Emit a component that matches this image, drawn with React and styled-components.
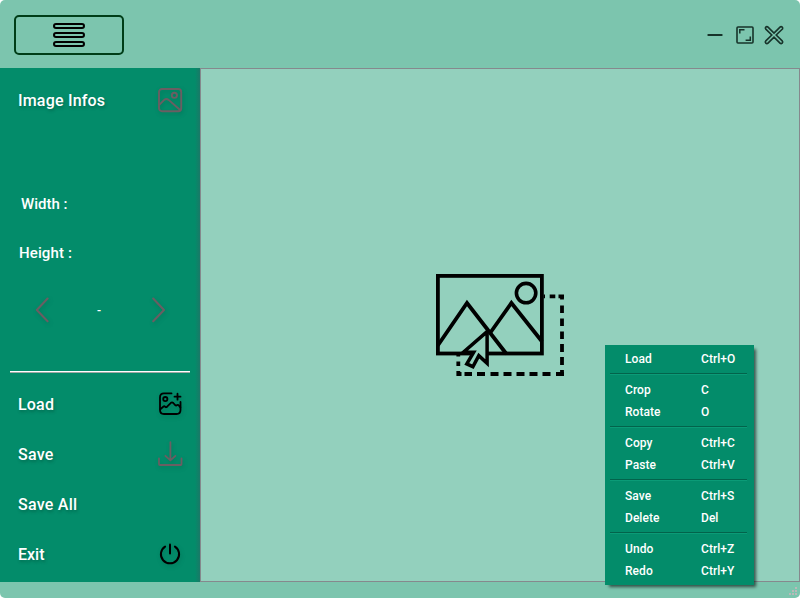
import React from "react";
import styled, { createGlobalStyle } from "styled-components";

const GlobalStyle = createGlobalStyle`
  * { box-sizing: border-box; }
  body { margin: 0; background: #fff; font-family: Roboto, "Liberation Sans", sans-serif; }
`;

const Window = styled.div`
  width: 800px;
  height: 598px;
  display: grid;
  grid-template-rows: 68px 514px 16px;
  background: #7cc5ae;
  border-radius: 5px;
  overflow: hidden;
  position: relative;
`;

const TitleBar = styled.header`
  display: flex;
  justify-content: space-between;
  align-items: center;
  padding: 2px 15px 0 14px;
`;

const MenuButton = styled.button`
  width: 110px;
  height: 40px;
  padding: 0;
  display: flex;
  align-items: center;
  justify-content: center;
  background: transparent;
  border: 2px solid #003d18;
  border-radius: 5px;
`;

const WindowControls = styled.div`
  display: flex;
  align-items: center;
  svg { display: block; }
`;

const Body = styled.div`
  display: grid;
  grid-template-columns: 200px 600px;
`;

const Sidebar = styled.aside`
  background: linear-gradient(to right, #038c6a 195px, #1a7967 200px);
  display: flex;
  flex-direction: column;
  color: #fff;
  font-weight: 500;
`;

const SideRow = styled.div`
  height: ${(p) => p.$height || 50}px;
  padding: 0 17px 0 18px;
  display: flex;
  align-items: center;
  justify-content: space-between;
  font-size: 16px;
  letter-spacing: ${(p) => p.$spacing || 0}px;
  text-shadow: 1px 2px 3px rgba(0, 55, 40, 0.35);
  svg { display: block; filter: drop-shadow(1px 2px 2px rgba(0, 55, 40, 0.22)); }
`;

const Dimension = styled.div`
  height: 49px;
  line-height: 49px;
  padding-left: ${(p) => p.$indent}px;
  font-size: 15px;
  letter-spacing: ${(p) => p.$spacing || 0}px;
`;

const Pager = styled.div`
  height: 64px;
  padding: 0 34px 0 35px;
  display: flex;
  align-items: center;
  justify-content: space-between;
  font-size: 12px;
  svg { display: block; filter: drop-shadow(1px 2px 2px rgba(0, 55, 40, 0.22)); }
`;

const PageLabel = styled.span`
  padding: 1px 3px 0 0;
`;

const Divider = styled.hr`
  width: 180px;
  height: 2px;
  margin: 29px 10px 6px;
  border: 0;
  border-top: 1px solid #fff;
  background: #a0a8a4;
`;

const Spacer = styled.div`
  height: ${(p) => p.$height}px;
`;

const Canvas = styled.main`
  background: #93d0bd;
  border: 1px solid #85898d;
  padding: 204px 0 0 234px;
  svg { display: block; }
`;

const Footer = styled.footer`
  display: flex;
  justify-content: flex-end;
  align-items: flex-end;
  padding: 0 2px 2px 0;
`;

const ContextMenu = styled.nav`
  position: absolute;
  left: 605px;
  top: 345px;
  width: 149px;
  height: 240px;
  padding: 3px 0;
  background: #038c6a;
  color: #fff;
  box-shadow: 3px 3px 3px -1px rgba(0, 0, 0, 0.6);
  font-size: 12px;
  font-weight: 500;
`;

const MenuItem = styled.div`
  height: 22px;
  line-height: 22px;
  padding-left: 20px;
  display: grid;
  grid-template-columns: 76px 1fr;
  letter-spacing: 0.05px;
`;

const Separator = styled.div`
  height: 2px;
  margin: 3px 7px 4px 5px;
  border-top: 1px solid #02634b;
  border-bottom: 1px solid #0b9b77;
`;

const DIM = "#6a5e62";

const HamburgerIcon = () => (
  <svg width="34" height="26" viewBox="0 0 34 26" fill="none" stroke="#000" strokeWidth="2">
    <rect x="2" y="2" width="30" height="4" rx="2" />
    <rect x="2" y="11" width="30" height="4" rx="2" />
    <rect x="2" y="20" width="30" height="4" rx="2" />
  </svg>
);

const ControlIcons = () => (
  <svg width="80" height="24" viewBox="0 0 80 24" fill="none" stroke="#17332a">
    <path d="M3.3 12H16.7" strokeWidth="2" strokeLinecap="round" />
    <rect x="32" y="4" width="16" height="16" rx="1" strokeWidth="1.6" />
    <path d="M34.8 10.5V6.8H39.5M45.3 13.5V17.2H40.6" strokeWidth="1.5" />
    <path
      d="M60.8 4.1a1.55 1.55 0 0 1 2.2 0L69 10.1l6-6a1.55 1.55 0 0 1 2.2 2.2L71.2 12l6 5.9a1.55 1.55 0 0 1-2.2 2.2L69 14.1l-6 6a1.55 1.55 0 0 1-2.2-2.2L66.8 12l-6-5.8a1.55 1.55 0 0 1 0-2.1Z"
      strokeWidth="1.6"
    />
  </svg>
);

const ImageIcon = () => (
  <svg width="26" height="26" viewBox="0 0 26 26" fill="none" stroke={DIM} strokeWidth="1.9">
    <rect x="2" y="2" width="22.2" height="22.2" rx="3" />
    <circle cx="17.4" cy="8.3" r="2.6" />
    <path d="M2 18.2L7.2 12.9Q9.4 11 11.7 12.9L23.4 23.2" />
  </svg>
);

const AddImageIcon = () => (
  <svg width="26" height="26" viewBox="0 0 26 26" fill="none" stroke="#000" strokeWidth="1.8" strokeLinecap="round">
    <path d="M14.5 2.4H7Q3 2.4 3 6.4V19Q3 23 7 23H19.5Q23.5 23 23.5 19V11" />
    <circle cx="8.3" cy="8.1" r="2.1" />
    <path d="M20.5 2.7V8.7M17.5 5.7H23.5" />
    <path d="M3.3 18.2L6.2 15.7Q7.3 14.8 8.3 15.9Q9.2 16.7 10.1 15.6L13.9 11.8Q15.1 10.8 16.3 12L18.2 14.1Q19.1 15 20.1 14.1Q21.1 13.6 22 14.6L23.4 16.4" />
  </svg>
);

const DownloadIcon = () => (
  <svg width="26" height="26" viewBox="0 0 26 26" fill="none" stroke={DIM} strokeWidth="1.8" strokeLinecap="round" strokeLinejoin="round">
    <path d="M13.4 1.2V19.2M8.4 14.8L13.4 19.4L18.4 14.8" />
    <path d="M2 17.5V23.3Q2 24 2.8 24H23.8Q24.5 24 24.5 23.3V17.5" />
  </svg>
);

const PowerIcon = () => (
  <svg width="26" height="26" viewBox="0 0 26 26" fill="none" stroke="#000" strokeWidth="2" strokeLinecap="round">
    <path d="M13 3.6V12.5" />
    <path d="M8.1 5.6A9.1 9.1 0 1 0 17.9 5.6" />
  </svg>
);

const Chevron = ({ d }) => (
  <svg width="15" height="26" viewBox="0 0 15 26" fill="none" stroke={DIM} strokeWidth="2" strokeLinecap="round" strokeLinejoin="round">
    <path d={d} />
  </svg>
);

const PictureSelection = () => (
  <svg width="132" height="106" viewBox="435 273 132 106" fill="none" stroke="#000" strokeWidth="3.8">
    <rect x="437.9" y="275.9" width="104" height="77.6" />
    <circle cx="526.1" cy="293.1" r="9.7" strokeWidth="3.6" />
    <path d="M437.8 345.5L467 303L506.5 354" strokeWidth="3.8" />
    <path d="M490.8 332L511.4 303L542 341.5" strokeWidth="3.8" />
    <path
      d="M487.1 331.6L463.4 352.2H473.7L466.8 363.9L472.9 366.7L478.8 355.6L487.1 363.2Z"
      fill="#93d0bd"
      strokeWidth="3.5"
    />
    <path
      d="M543.6 296.3H545M549.7 296.3H555.3M558.5 296.3H564M562 294.7V299.5M562 305.5V313M562 318.5V326M562 331.5V339M562 344V352M562 357V365M562 370V376M564 374H556M550.5 374H542.5M537.5 374H529.5M524.5 374H516.5M511.5 374H503.5M498.5 374H490.5M485 374H477M472 374H464.5M461.5 374H456.5M458.3 376V371M458.3 366V361.5M458.3 356.5V354"
      strokeWidth="3.8"
    />
  </svg>
);

const ResizeGrip = () => (
  <svg width="9" height="9" viewBox="0 0 9 9" fill="#b9b9b9">
    <path d="M6 0h2v2H6zM3 3h2v2H3zM6 3h2v2H6zM0 6h2v2H0zM3 6h2v2H3zM6 6h2v2H6z" />
  </svg>
);

const menuGroups = [
  [["Load", "Ctrl+O"]],
  [["Crop", "C"], ["Rotate", "O"]],
  [["Copy", "Ctrl+C"], ["Paste", "Ctrl+V"]],
  [["Save", "Ctrl+S"], ["Delete", "Del"]],
  [["Undo", "Ctrl+Z"], ["Redo", "Ctrl+Y"]],
];

export default function App() {
  return (
    <>
      <GlobalStyle />
      <Window>
        <TitleBar>
          <MenuButton aria-label="Menu"><HamburgerIcon /></MenuButton>
          <WindowControls><ControlIcons /></WindowControls>
        </TitleBar>
        <Body>
          <Sidebar>
            <SideRow $height={64} $spacing={0.2}>Image Infos<ImageIcon /></SideRow>
            <Spacer $height={48} />
            <Dimension $indent={21}>Width :</Dimension>
            <Dimension $indent={19} $spacing={0.12}>Height :</Dimension>
            <Pager>
              <Chevron d="M12.6 1.5L1.8 13L12.6 24.2" />
              <PageLabel>-</PageLabel>
              <Chevron d="M2.2 1.5L13 13L2.2 24.2" />
            </Pager>
            <Divider />
            <SideRow $spacing={0.2}>Load<AddImageIcon /></SideRow>
            <SideRow $spacing={0.25}>Save<DownloadIcon /></SideRow>
            <SideRow $spacing={0.25}>Save All</SideRow>
            <SideRow>Exit<PowerIcon /></SideRow>
          </Sidebar>
          <Canvas><PictureSelection /></Canvas>
        </Body>
        <Footer><ResizeGrip /></Footer>
        <ContextMenu>
          {menuGroups.map((group, i) => (
            <React.Fragment key={i}>
              {i > 0 && <Separator />}
              {group.map(([label, shortcut]) => (
                <MenuItem key={label}><span>{label}</span><span>{shortcut}</span></MenuItem>
              ))}
            </React.Fragment>
          ))}
        </ContextMenu>
      </Window>
    </>
  );
}
